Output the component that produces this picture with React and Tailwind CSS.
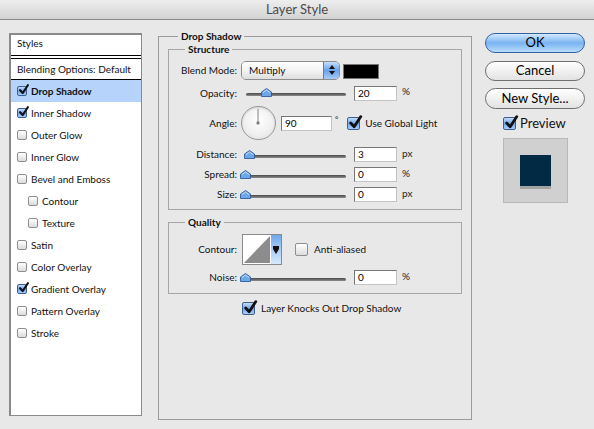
import React from 'react';

const font = { fontFamily: '"Lato", "DejaVu Sans", sans-serif' };

function Check({ checked, size = 'md' }) {
  const box = size === 'sm' ? 'w-[10px] h-[10px]' : 'w-[13px] h-[13px]';
  return (
    <span className={`relative inline-block shrink-0 ${box}`}>
      <span
        className={`absolute inset-0 rounded-[2px] border ${
          checked
            ? 'border-[#3b5f93] bg-gradient-to-b from-[#c4ddfb] via-[#6fa4ea] to-[#aacdf7]'
            : 'border-[#8e8e8e] bg-gradient-to-b from-[#ffffff] to-[#dcdcdc]'
        }`}
      />
      {checked && (
        <svg viewBox="0 0 14 14" className="absolute left-[1px] top-[-2px] w-[115%] h-[115%]">
          <path d="M2.5 7.5 L5.8 11 L12 1.5" fill="none" stroke="#111" strokeWidth="2.6" strokeLinecap="round" strokeLinejoin="round" />
        </svg>
      )}
    </span>
  );
}

function Slider({ pos }) {
  return (
    <div className="relative w-[100px] h-[12px]">
      <div className="absolute left-0 right-0 top-[6px] h-[3px] rounded-full bg-gradient-to-b from-[#4a4a4a] to-[#8c8c8c]" />
      <svg viewBox="0 0 11 9" className="absolute top-[1px] w-[11px] h-[9px]" style={{ left: pos - 5 }}>
        <path d="M0.5 8.5 L0.5 4 L5.5 0.5 L10.5 4 L10.5 8.5 Z" fill="#6ea6ea" stroke="#2f5d9b" strokeWidth="0.9" />
        <path d="M2 4.5 L5.5 2 L9 4.5" fill="none" stroke="#cfe3fb" strokeWidth="0.9" />
      </svg>
    </div>
  );
}

function Field({ value, w = 'w-[43px]' }) {
  return (
    <div className={`${w} h-[15px] border border-t-[#777] border-l-[#777] border-r-[#c4c4c4] border-b-[#c4c4c4] bg-white pl-[3px] text-[10px] leading-[13px] text-black`}>
      {value}
    </div>
  );
}

function Label({ children }) {
  return <div className="w-[68px] shrink-0 text-right text-[10px] text-[#111] whitespace-nowrap">{children}</div>;
}

function SliderRow({ label, pos, value, unit, className }) {
  return (
    <div className={`flex items-center h-[15px] ${className}`}>
      <Label>{label}</Label>
      <div className="ml-[9px]">
        <Slider pos={pos} />
      </div>
      <div className="ml-[8px]">
        <Field value={value} />
      </div>
      <span className="ml-[5px] text-[10px] text-[#222] -mt-[3px]">{unit}</span>
    </div>
  );
}

const styleRows = [
  { name: 'Drop Shadow', checked: true, active: true },
  { name: 'Inner Shadow', checked: true },
  { name: 'Outer Glow' },
  { name: 'Inner Glow' },
  { name: 'Bevel and Emboss' },
  { name: 'Contour', sub: true },
  { name: 'Texture', sub: true },
  { name: 'Satin' },
  { name: 'Color Overlay' },
  { name: 'Gradient Overlay', checked: true },
  { name: 'Pattern Overlay' },
  { name: 'Stroke' },
];

function AquaButton({ children, primary, className }) {
  return (
    <div
      className={`flex items-center justify-center rounded-full border text-[13px] text-black ${
        primary
          ? 'border-[#34619f] bg-gradient-to-b from-[#d4e9fd] via-[#79b3f1] to-[#b9ddfb]'
          : 'border-[#6f6f6f] bg-gradient-to-b from-[#ffffff] via-[#f1f1f1] to-[#e2e2e2]'
      } ${className}`}
    >
      {children}
    </div>
  );
}

export default function App() {
  return (
    <div className="w-[594px] h-[429px] bg-[#e8e8e8] overflow-hidden" style={font}>
      <div className="h-[20px] border-b border-[#8a8a8a] bg-gradient-to-b from-[#eeeeee] to-[#d3d3d3] flex items-center justify-center text-[13px] text-[#4a4a4a]">
        Layer Style
      </div>

      <div className="flex">
        {/* styles list */}
        <div className="ml-[9px] mt-[13px] w-[133px] h-[383px] border-l-2 border-t-2 border-r border-b border-[#8a8a8a] bg-white">
          <div className="h-[20px] flex items-center pl-[6px] pb-[3px] text-[10px] text-[#111]">Styles</div>
          <div className="h-[4px] border-y border-black" />
          <div className="h-[21px] flex items-center pl-[6px] border-b border-black text-[10px] text-[#111] whitespace-nowrap">
            Blending Options: Default
          </div>
          {styleRows.map((r) => (
            <div
              key={r.name}
              className={`h-[22px] flex items-center ${r.sub ? 'pl-[17px]' : 'pl-[6px]'} ${r.active ? 'bg-[#b5d3fb]' : ''}`}
            >
              <Check checked={r.checked} size="sm" />
              <span className={`ml-[4px] text-[10px] text-[#111] whitespace-nowrap ${r.active ? 'font-bold' : ''}`}>{r.name}</span>
            </div>
          ))}
        </div>

        {/* settings */}
        <fieldset className="ml-[16px] mt-[10px] w-[314px] h-[390px] border border-[#9b9b9b] px-[9px]">
          <legend className="ml-[10px] px-[3px] text-[10px] leading-[12px] font-bold text-[#111]">Drop Shadow</legend>

          <fieldset className="mt-[1px] border border-[#a6a6a6] pb-[7px]">
            <legend className="ml-[16px] px-[3px] text-[10px] leading-[12px] font-bold text-[#111]">Structure</legend>

            <div className="mt-[5px] h-[20px] flex items-center">
              <Label>Blend Mode:</Label>
              <div className="ml-[4px] w-[99px] h-[19px] flex rounded-[5px] border border-[#8d8d8d] overflow-hidden">
                <div className="flex-1 flex items-center pl-[7px] text-[10px] text-[#111] bg-gradient-to-b from-[#ffffff] via-[#f3f3f3] to-[#dedede]">
                  Multiply
                </div>
                <div className="w-[16px] flex flex-col items-center justify-center gap-[2px] border-l border-[#5c7fb0] bg-gradient-to-b from-[#c6ddfa] via-[#6aa2ea] to-[#a8cbf7]">
                  <svg viewBox="0 0 6 4" className="w-[6px] h-[4px]"><path d="M0 4 L3 0 L6 4 Z" fill="#111" /></svg>
                  <svg viewBox="0 0 6 4" className="w-[6px] h-[4px]"><path d="M0 0 L3 4 L6 0 Z" fill="#111" /></svg>
                </div>
              </div>
              <div className="ml-[3px] mt-[2px] w-[36px] h-[15px] bg-black border border-[#777]" />
            </div>

            <SliderRow label="Opacity:" pos={20} value="20" unit="%" className="mt-[5px] h-[16px]" />

            <div className="mt-[5px] h-[34px] flex items-center">
              <Label>Angle:</Label>
              <div className="ml-[4px] relative w-[35px] h-[34px] rounded-full border border-[#9a9a9a] bg-[radial-gradient(circle_at_50%_40%,#ffffff_0%,#efefef_60%,#d6d6d6_100%)] shadow-[inset_0_1px_2px_rgba(0,0,0,0.15)]">
                <svg viewBox="0 0 35 34" className="absolute inset-0 w-full h-full">
                  <line x1="17" y1="17" x2="17" y2="2" stroke="#7a7a7a" strokeWidth="1" />
                  <rect x="15.5" y="15.5" width="3" height="3" fill="#777" />
                </svg>
              </div>
              <div className="ml-[5px]">
                <Field value="90" w="w-[51px]" />
              </div>
              <span className="ml-[3px] -mt-[8px] text-[8px] text-[#222]">°</span>
              <div className="ml-[9px] flex items-center">
                <Check checked />
                <span className="ml-[5px] text-[10px] text-[#111] whitespace-nowrap">Use Global Light</span>
              </div>
            </div>

            <SliderRow label="Distance:" pos={3} value="3" unit="px" className="mt-[7px]" />
            <SliderRow label="Spread:" pos={-1} value="0" unit="%" className="mt-[5px]" />
            <SliderRow label="Size:" pos={-1} value="0" unit="px" className="mt-[5px]" />
          </fieldset>

          <fieldset className="mt-[6px] border border-[#a6a6a6] pb-[8px]">
            <legend className="ml-[16px] px-[3px] text-[10px] leading-[12px] font-bold text-[#111]">Quality</legend>

            <div className="mt-[6px] h-[31px] flex items-center">
              <Label>Contour:</Label>
              <div className="ml-[5px] w-[40px] h-[31px] flex border border-[#8a8a8a] bg-white">
                <svg viewBox="0 0 29 29" preserveAspectRatio="none" className="flex-1 h-full">
                  <path d="M1 28 L28 1 L28 28 Z" fill="#8c8c8c" />
                </svg>
                <div className="w-[10px] flex items-center justify-center bg-gradient-to-b from-[#6fa6ec] via-[#a9cdf7] to-[#d7e9fd]">
                  <svg viewBox="0 0 6 8" className="w-[6px] h-[8px]">
                    <path d="M0 0 L6 0 L6 3 L3 8 L0 3 Z" fill="#111" />
                  </svg>
                </div>
              </div>
              <div className="ml-[13px] flex items-center">
                <Check />
                <span className="ml-[6px] text-[10px] text-[#111]">Anti-aliased</span>
              </div>
            </div>

            <SliderRow label="Noise:" pos={-1} value="0" unit="%" className="mt-[5px] h-[14px]" />
          </fieldset>

          <div className="mt-[7px] h-[14px] flex items-center pl-[74px]">
            <Check checked />
            <span className="ml-[6px] text-[10px] text-[#111] whitespace-nowrap">Layer Knocks Out Drop Shadow</span>
          </div>
        </fieldset>

        {/* actions */}
        <div className="ml-[13px] mt-[13px] w-[100px] flex flex-col">
          <AquaButton primary className="h-[20px]">OK</AquaButton>
          <AquaButton className="mt-[8px] h-[20px]">Cancel</AquaButton>
          <AquaButton className="mt-[7px] h-[21px]">New Style...</AquaButton>
          <div className="mt-[8px] h-[13px] pl-[18px] flex items-center">
            <Check checked />
            <span className="ml-[4px] text-[13px] leading-[13px] text-[#111]">Preview</span>
          </div>
          <div className="mt-[8px] ml-[18px] w-[65px] h-[65px] border border-[#b8b8b8] bg-[#d0d0d0] flex items-center justify-center">
            <div className="w-[31px] h-[31px] bg-[#032a44] shadow-[0_3px_0_#a2a2a2]" />
          </div>
        </div>
      </div>
    </div>
  );
}
